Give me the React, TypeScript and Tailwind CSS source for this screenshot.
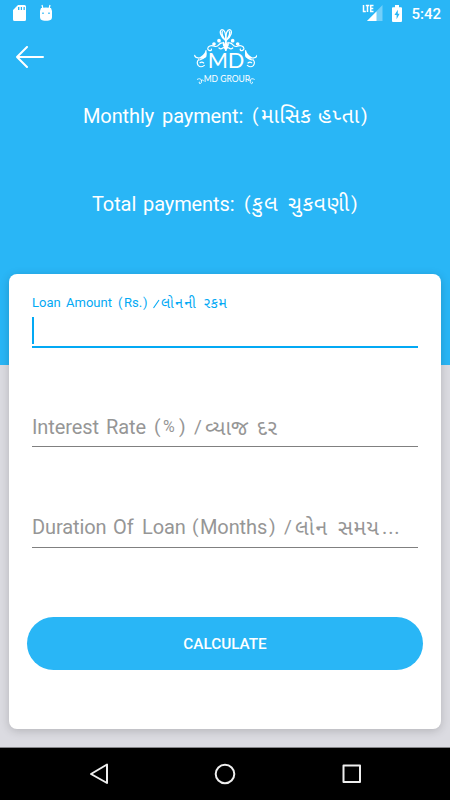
import React from "react";

const textFont = "font-[Roboto,'Noto_Sans_Gujarati','Noto_Sans',sans-serif]";

function StatusBar() {
  return (
    <div className="flex h-[26px] items-center pl-[13px] pr-[9px] text-white">
      <svg width="13" height="16" viewBox="0 0 13 16">
        <path fillRule="evenodd" fill="currentColor" d="M5 0h6.500Q13 0 13 1.500v13q0 1.500-1.500 1.500h-10Q0 16 0 14.500V5zM5 2v3h1.400V2zm2.800 0v3h1.200V2zm2.700 0v3h1.300V2z" />
      </svg>
      <svg width="14" height="17" viewBox="0 0 14 17" className="-mt-px ml-[13px]">
        <path d="M3 1l1 4M11 1l-1 4" stroke="currentColor" strokeWidth="1.200" />
        <path fillRule="evenodd" fill="currentColor" d="M2 4q5-1 10 0l1 3v6q0 3-3 3.500-3 .5-6 0-3-.5-3-3.500V7zM3.300 8.500v1.500h1.400V8.500zm6 0v1.500h1.400V8.500z" />
      </svg>
      <svg width="21" height="18" viewBox="0 0 21 18" className="ml-auto">
        <path d="M20.500 1v16H5z" fill="currentColor" opacity=".35" />
        <path d="M14.500 7.500V17H5z" fill="currentColor" />
        <path d="M1.500 1v6.500h2.300M3.800 1.500h3.500M5.500 1.500v6.500M11.500 1.500H8.700v6h2.800M9 4.500h2.300" fill="none" stroke="currentColor" strokeWidth="1.500" />
      </svg>
      <svg width="10" height="17" viewBox="0 0 10 16" preserveAspectRatio="none" className="ml-[9px]">
        <path fillRule="evenodd" fill="currentColor" d="M3 0h4v2h2q1 0 1 1v12q0 1-1 1H1q-1 0-1-1V3q0-1 1-1h2zM5.800 4.500L2.500 9.300h2.100V13.500L7.600 8.200H5.800z" />
      </svg>
      <span className="ml-[9px] mt-[2px] text-[15px] font-medium leading-none">5:42</span>
    </div>
  );
}

function Ornament() {
  return (
    <>
      <g fill="none" stroke="currentColor" strokeWidth="4" strokeLinecap="round">
        <path d="M168 78C151 66 146 46 156 44c8 0 12 14 12 34M163 72c-7-10-8-20-6-22" />
        <path d="M168 80q-3 14-1 26M161 82q-2 11 4 14M147 99q5 5 11 0 5-4 8 4" />
        <path d="M160 84q-8-2-13 5-5 7-13 5-12-5-19 2-5 8 4 11 7 0 5-5" strokeWidth="3.500" />
        <path d="M108 107q3 22-19 28M86 129q-11-1-12-8M86 134q-8 8-1 18 8 7 18-1M90 143q6-4 11 1" strokeWidth="3.500" />
        <path d="M82 193q9-5 12 2 3 10-4 11-5-1-2-5M94 196q4-3 7 1" strokeWidth="2.500" />
      </g>
      <g fill="currentColor">
        <circle cx="132" cy="87" r="5.500" />
        <circle cx="147" cy="77" r="5.500" />
        <path d="M107 107q-5 14-24 23 19 4 25-3 4-6-1-20" />
        <path d="M168 80l-7 8 7 20z" />
      </g>
    </>
  );
}

function Logo() {
  return (
    <svg width="64" height="60" viewBox="69 39 192 180" className="text-white">
      <Ornament />
      <g transform="translate(335 0) scale(-1 1)"><Ornament /></g>
      <g fill="currentColor">
        <text x="113" y="159" textLength="110" lengthAdjust="spacingAndGlyphs" className="font-[Lato,sans-serif] text-[64px] font-normal">MD</text>
        <text x="101" y="202" textLength="139" lengthAdjust="spacingAndGlyphs" className="font-[Lato,sans-serif] text-[26px] font-normal">MD GROUP</text>
      </g>
    </svg>
  );
}

export default function App() {
  return (
    <div className={`${textFont} h-[800px] w-[450px] overflow-hidden bg-[#dbdbe1]`}>
      <header className="h-[365px] bg-[#29b6f6] text-white">
        <StatusBar />
        <div className="grid h-[62px] grid-cols-[1fr_64px_1fr]">
          <svg width="28" height="22" viewBox="0 0 28 22" className="ml-4 mt-5" fill="none" stroke="currentColor" strokeWidth="2" strokeLinecap="round" strokeLinejoin="round">
            <path d="M11 1L1 11l10 10M1 11h26" />
          </svg>
          <div className="pt-[2px]"><Logo /></div>
        </div>
        <div className="mt-[14px] flex h-7 items-center whitespace-pre pl-[83px] text-[20px]">
          <span className="w-[79px] tracking-[-.1px]">Monthly</span>
          <span className="w-[90px] tracking-[-.1px]">payment:</span>
          <span className="w-[9px] text-[19px]">(</span>
          <span className="w-[57px] pt-[2px] text-[21px] tracking-[.3px]">માસિક</span>
          <span className="w-[43px] pt-[2px] text-[21px] tracking-[1.200px]">હપ્તા</span>
          <span className="text-[19px]">)</span>
        </div>
        <div className="mt-[60px] flex h-7 items-center whitespace-pre pl-[92px] text-[20px]">
          <span className="w-[51px] tracking-[-.1px]">Total</span>
          <span className="w-[101px] tracking-[-.1px]">payments:</span>
          <span className="w-[8px] text-[19px]">(</span>
          <span className="w-[36px] pt-[2px] text-[21px] tracking-[1.200px]">કુલ</span>
          <span className="w-[63px] pt-[2px] text-[21px] tracking-[.6px]">ચુકવણી</span>
          <span className="text-[19px]">)</span>
        </div>
      </header>

      <main className="relative mx-[9px] -mt-[91px] h-[455px] rounded-lg bg-white px-[23px] pt-[20px] shadow-[0_2px_10px_rgba(0,0,0,.18)]">
        <div className="h-[54px] border-b-2 border-[#03a9f4] text-[#03a9f4]">
          <div className="flex h-[18px] items-center whitespace-pre text-[13px]">
            <span className="w-[34px]">Loan</span>
            <span className="w-[52px]">Amount</span>
            <span className="w-[6px]">(</span>
            <span className="w-[19px]">Rs.</span>
            <span className="w-[10px]">)</span>
            <svg width="8" height="11" viewBox="0 0 8 11" className="mt-px"><path d="M.5 10L6 2" stroke="currentColor" strokeWidth="1.100" /></svg>
            <span className="w-[43px] text-[14px] tracking-[1.500px]">લોનની</span>
            <span className="text-[14px] tracking-[.5px]">રકમ</span>
          </div>
          <div className="mt-[5px] h-[27px] w-[2px] bg-[#03a9f4]" />
        </div>
        <div className="mt-[66px] flex h-[33px] whitespace-pre border-b border-[#808080] text-[20px] leading-[26px] tracking-[-.1px] text-[#969696]">
          <span className="w-[74px]">Interest</span>
          <span className="w-[48px]">Rate</span>
          <span className="w-[9px] text-[19px]">(</span>
          <span className="w-[16px] text-[16px]">%</span>
          <span className="w-[15px] text-[19px]">)</span>
          <span className="w-[11px] text-[19px]">/</span>
          <span className="w-[52px] text-[21px] leading-[28px]">વ્યાજ</span>
          <span className="text-[21px] leading-[28px] tracking-[1px]">દર</span>
        </div>
        <div className="mt-[67px] flex h-[34px] whitespace-pre border-b border-[#808080] text-[20px] leading-[26px] tracking-[-.1px] text-[#969696]">
          <span className="w-[81px]">Duration</span>
          <span className="w-[29px]">Of</span>
          <span className="w-[50px]">Loan</span>
          <span className="w-[8px] text-[19px]">(</span>
          <span className="w-[69px]">Months</span>
          <span className="w-[15px] text-[19px]">)</span>
          <span className="w-[11px] text-[19px]">/</span>
          <span className="w-[43px] text-[21px] leading-[28px] tracking-[1.500px]">લોન</span>
          <span className="w-[44px] text-[21px] leading-[28px] tracking-[.6px]">સમય</span>
          <span className="tracking-[.9px]">...</span>
        </div>
        <button className="-ml-[5px] mt-[69px] block h-[53px] w-[396px] rounded-full bg-[#29b6f6] pt-[2px] text-[15.300px] font-medium text-white">CALCULATE</button>
      </main>

      <nav className="mt-[18px] flex h-[53px] items-center justify-between border-t border-[#858588] bg-black px-[88px] text-[#eee]">
        <svg width="22" height="22" viewBox="0 0 22 22" fill="none" stroke="currentColor" strokeWidth="2" strokeLinejoin="round"><path d="M19 1.500v18.500L3 11z" /></svg>
        <svg width="22" height="22" viewBox="0 0 22 22" fill="none" stroke="currentColor" strokeWidth="2"><circle cx="11" cy="11" r="9.300" /></svg>
        <svg width="22" height="22" viewBox="0 0 22 22" fill="none" stroke="currentColor" strokeWidth="2" strokeLinejoin="round"><path d="M3.500 2.500h16.500v16.500H3.500z" /></svg>
      </nav>
    </div>
  );
}
